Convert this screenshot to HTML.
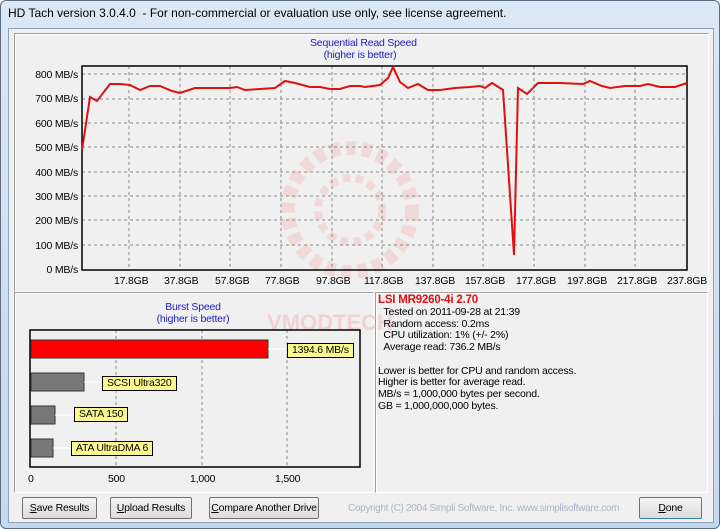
<!DOCTYPE html><html><head><style>
body{margin:0;width:720px;height:529px;overflow:hidden;background:#fff;font-family:"Liberation Sans",sans-serif;}
.win{position:absolute;left:0;top:0;width:718px;height:527px;border:1px solid #5a6e86;border-radius:6px;background:linear-gradient(#dbe8f5,#c6d8ec);}
.title{position:absolute;left:8px;top:6px;font-size:12px;color:#000;}
.client{position:absolute;left:8px;top:28px;width:704px;height:493px;background:#f0f0f0;border:1px solid #8ea3bb;}
.panel{position:absolute;border:1px solid #a0a0a0;border-right-color:#fff;border-bottom-color:#fff;box-shadow:inset 1px 1px 0 #fff;}
.t{position:absolute;font-size:10.5px;letter-spacing:-0.2px;white-space:nowrap;}
.lab{position:absolute;font-size:10.5px;letter-spacing:-0.2px;background:#fafa90;border:1px solid #000;padding:0 4px;height:13px;line-height:13px;white-space:nowrap;}
.btn{position:absolute;top:497px;height:22px;border:1px solid #707070;border-radius:2px;background:linear-gradient(#f4f4f4,#dcdcdc);font-size:10.5px;letter-spacing:-0.2px;text-align:center;line-height:20px;box-sizing:border-box;white-space:nowrap;}
</style></head><body>
<div class="win"></div>
<div class="title">HD Tach version 3.0.4.0&nbsp; - For non-commercial or evaluation use only, see license agreement.</div>
<div class="client"></div>
<div class="panel" style="left:14px;top:33px;width:693px;height:257px;background:#f0f0f0"></div>
<div class="panel" style="left:14px;top:292px;width:358px;height:199px;background:#f0f0f0"></div>
<div class="panel" style="left:375px;top:292px;width:331px;height:199px;background:#f0f0f0"></div>
<svg style="position:absolute;left:0;top:0" width="720" height="529">
<g opacity="0.55">
<text x="330" y="330" font-size="22" font-weight="bold" fill="#f2b8b8" text-anchor="middle" font-family="Liberation Sans">VMODTECH</text>
<circle cx="350" cy="210" r="62" fill="none" stroke="#f4c8c8" stroke-width="14" stroke-dasharray="10 6"/>
<circle cx="350" cy="210" r="32" fill="none" stroke="#f4c8c8" stroke-width="8" stroke-dasharray="8 5"/>
</g>
<g stroke="#888" stroke-dasharray="3 3" stroke-width="1">
<line x1="82" y1="74" x2="687" y2="74"/><line x1="82" y1="99" x2="687" y2="99"/><line x1="82" y1="123" x2="687" y2="123"/><line x1="82" y1="147" x2="687" y2="147"/><line x1="82" y1="172" x2="687" y2="172"/><line x1="82" y1="196" x2="687" y2="196"/><line x1="82" y1="220" x2="687" y2="220"/><line x1="82" y1="245" x2="687" y2="245"/>
<line x1="129" y1="66" x2="129" y2="270"/><line x1="180" y1="66" x2="180" y2="270"/><line x1="230" y1="66" x2="230" y2="270"/><line x1="281" y1="66" x2="281" y2="270"/><line x1="332" y1="66" x2="332" y2="270"/><line x1="382" y1="66" x2="382" y2="270"/><line x1="433" y1="66" x2="433" y2="270"/><line x1="483" y1="66" x2="483" y2="270"/><line x1="534" y1="66" x2="534" y2="270"/><line x1="585" y1="66" x2="585" y2="270"/><line x1="635" y1="66" x2="635" y2="270"/>
<line x1="116" y1="330" x2="116" y2="467"/><line x1="202" y1="330" x2="202" y2="467"/><line x1="287" y1="330" x2="287" y2="467"/>
</g>
<rect x="82" y="66" width="605" height="204" fill="none" stroke="#000" stroke-width="1.5"/>
<polyline fill="none" stroke="#e01010" stroke-width="2" points="82,150 90,97 97,101 110,84 120,84 130,85 140,90 150,86 160,86 172,91 180,93 195,88 210,88 230,88 237,87 245,90 260,89 275,88 285,81 295,83 310,87 320,87 330,89 340,89 350,86 360,86 365,87 380,85 388,78 393,67 400,82 408,88 418,84 428,90 440,90 455,88 470,87 480,86 485,88 492,83 503,90 514,255 518,88 527,94 538,83 560,83 583,84 590,81 602,86 610,88 625,86 640,86 648,84 660,87 675,87 687,83"/>
<rect x="30" y="330" width="330" height="137" fill="none" stroke="#000" stroke-width="1.5"/>
<rect x="31" y="340" width="237" height="18" fill="#ff0000" stroke="#333"/>
<rect x="31" y="373" width="53" height="18" fill="#787878" stroke="#333"/>
<rect x="31" y="406" width="24" height="18" fill="#787878" stroke="#333"/>
<rect x="31" y="439" width="22" height="18" fill="#787878" stroke="#333"/>
<g stroke="#fff"><line x1="268" y1="349" x2="287" y2="349"/><line x1="84" y1="382" x2="102" y2="382"/><line x1="55" y1="415" x2="74" y2="415"/><line x1="53" y1="448" x2="71" y2="448"/></g>
</svg>
<div class="t" style="left:310px;top:37px;color:#2020c0;text-align:center;width:100px">Sequential Read Speed<br>(higher is better)</div>
<div class="t" style="left:22px;top:63px;text-align:right;width:56px;line-height:24.4px">800 MB/s<br>700 MB/s<br>600 MB/s<br>500 MB/s<br>400 MB/s<br>300 MB/s<br>200 MB/s<br>100 MB/s<br>0 MB/s</div>
<div class="t" style="left:114px;top:275px">17.8GB</div><div class="t" style="left:164px;top:275px">37.8GB</div><div class="t" style="left:215px;top:275px">57.8GB</div><div class="t" style="left:265px;top:275px">77.8GB</div><div class="t" style="left:316px;top:275px">97.8GB</div><div class="t" style="left:364px;top:275px">117.8GB</div><div class="t" style="left:415px;top:275px">137.8GB</div><div class="t" style="left:465px;top:275px">157.8GB</div><div class="t" style="left:516px;top:275px">177.8GB</div><div class="t" style="left:567px;top:275px">197.8GB</div><div class="t" style="left:617px;top:275px">217.8GB</div><div class="t" style="left:667px;top:275px">237.8GB</div>
<div class="t" style="left:143px;top:301px;color:#2020c0;text-align:center;width:100px">Burst Speed<br>(higher is better)</div>
<div class="lab" style="left:287px;top:343px">1394.6 MB/s</div>
<div class="lab" style="left:102px;top:376px">SCSI Ultra320</div>
<div class="lab" style="left:74px;top:407px">SATA 150</div>
<div class="lab" style="left:71px;top:441px">ATA UltraDMA 6</div>
<div class="t" style="left:28px;top:473px">0</div><div class="t" style="left:108px;top:473px">500</div><div class="t" style="left:190px;top:473px">1,000</div><div class="t" style="left:275px;top:473px">1,500</div>
<div class="t" style="left:378px;top:294px;color:#e01010;font-weight:bold;font-size:11.5px">LSI MR9260-4i 2.70</div>
<div class="t" style="left:378px;top:307px;line-height:11.7px">&nbsp;&nbsp;Tested on 2011-09-28 at 21:39<br>&nbsp;&nbsp;Random access: 0.2ms<br>&nbsp;&nbsp;CPU utilization: 1% (+/- 2%)<br>&nbsp;&nbsp;Average read: 736.2 MB/s<br><br>Lower is better for CPU and random access.<br>Higher is better for average read.<br>MB/s = 1,000,000 bytes per second.<br>GB = 1,000,000,000 bytes.</div>
<div class="btn" style="left:22px;width:75px"><u>S</u>ave Results</div>
<div class="btn" style="left:110px;width:82px"><u>U</u>pload Results</div>
<div class="btn" style="left:209px;width:110px"><u>C</u>ompare Another Drive</div>
<div class="t" style="left:348px;top:503px;color:#a8b4c8;font-size:10px;letter-spacing:-0.3px">Copyright (C) 2004 Simpli Software, Inc. www.simplisoftware.com</div>
<div class="btn" style="left:639px;width:63px;border-color:#3c7fb1"><u>D</u>one</div>
</body></html>
